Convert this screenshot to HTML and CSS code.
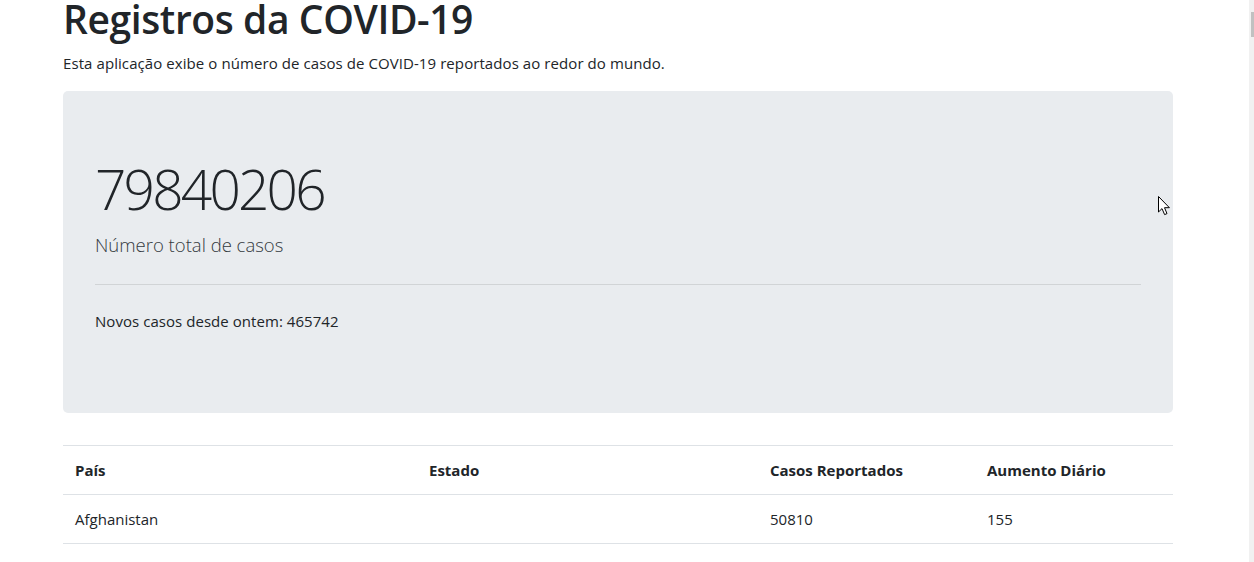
FILE: index.html
```html
<!DOCTYPE html>
<html lang="pt-BR">
<head>
<meta charset="utf-8">
<title>Registros da COVID-19</title>
<link rel="stylesheet" href="styles.css">
</head>
<body>
<div class="page">
  <div class="container">
    <h1 class="title">Registros da COVID-19</h1>
    <p class="intro">Esta aplicação exibe o número de casos de COVID-19 reportados ao redor do mundo.</p>
    <div class="jumbotron">
      <h1 class="display">79840206</h1>
      <p class="lead">Número total de casos</p>
      <hr class="divider">
      <p class="news">Novos casos desde ontem: 465742</p>
    </div>
    <table class="table">
      <thead>
        <tr>
          <th class="c1">País</th>
          <th class="c2">Estado</th>
          <th class="c3">Casos Reportados</th>
          <th class="c4">Aumento Diário</th>
        </tr>
      </thead>
      <tbody>
        <tr>
          <td>Afghanistan</td>
          <td></td>
          <td>50810</td>
          <td>155</td>
        </tr>
      </tbody>
    </table>
  </div>
</div>
<div class="scrollbar"><div class="thumb"></div></div>
<svg class="cursor" width="14" height="22" viewBox="0 0 14 22"><path d="M1.5 1.5 L1.5 17 L5 13.6 L7.6 19.6 L10 18.6 L7.5 12.7 L12.4 12.7 Z" fill="#fff" stroke="#000" stroke-width="1" stroke-linejoin="round"/></svg>
</body>
</html>
```
FILE: styles.css
```css
html, body {
  margin: 0;
  padding: 0;
  background: #fff;
  overflow: hidden;
  height: 562px;
}
body {
  font-family: "Open Sans", "Noto Sans", "Liberation Sans", sans-serif;
  font-size: 15px;
  line-height: 24px;
  color: #212529;
}
.page {
  padding-right: 18px;
}
.container {
  width: 1110px;
  margin: 0 auto;
}
.title {
  font-size: 39px;
  font-weight: 600;
  line-height: 48px;
  margin: -5px 0 8px 0;
  letter-spacing: -0.4px;
}
.intro {
  margin: 0 0 16px 0;
  letter-spacing: 0.08px;
}
.jumbotron {
  background: #e9ecef;
  border-radius: 5px;
  padding: 64px 32px;
  margin-bottom: 32px;
}
.display {
  font-size: 55px;
  font-weight: 300;
  line-height: 67px;
  margin: 0 0 8px 0;
  letter-spacing: -2.8px;
}
.lead {
  font-size: 18.5px;
  font-weight: 300;
  line-height: 30px;
  margin: 0 0 16px 0;
  color: #343a40;
}
.divider {
  border: 0;
  border-top: 1px solid rgba(0,0,0,0.1);
  margin: 24px 0;
  height: 0;
}
.news {
  margin: 0 0 16px 0;
  letter-spacing: 0.05px;
}
.table {
  width: 1110px;
  border-collapse: collapse;
  table-layout: fixed;
}
.table th, .table td {
  text-align: left;
  padding: 12px;
  border-top: 1px solid #dee2e6;
  vertical-align: top;
  height: 24px;
}
.table tbody tr:last-child td {
  border-bottom: 1px solid #dee2e6;
}
.table th {
  font-weight: 700;
}
.c1 { width: 330px; }
.c2 { width: 317px; }
.c3 { width: 193px; }
.c4 { width: 174px; }
.scrollbar {
  position: fixed;
  top: 0;
  right: 0;
  width: 5px;
  height: 562px;
  background: #f1f1f1;
}
.thumb {
  margin: 12px 0 0 2px;
  width: 3px;
  height: 25px;
  background: #c1c1c1;
}
.cursor {
  position: fixed;
  left: 1157px;
  top: 195px;
}
```
